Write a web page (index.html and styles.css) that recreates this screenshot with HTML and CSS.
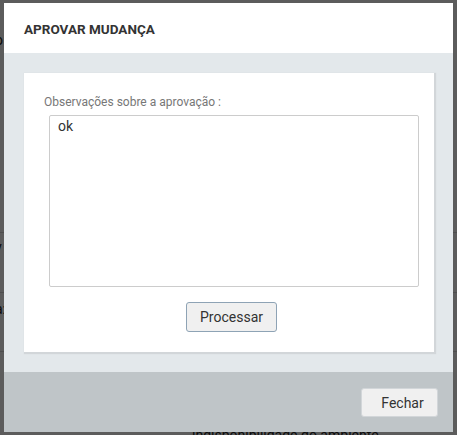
FILE: index.html
```html
<!DOCTYPE html>
<html lang="pt-BR">
<head>
<meta charset="utf-8">
<title>Aprovar mudança</title>
<link rel="stylesheet" href="styles.css">
</head>
<body>
<div class="page">
  <div class="row row-a"><span class="cell">o</span></div>
  <div class="row row-b"><span class="cell">v</span></div>
  <div class="row row-c"><span class="cell">a:</span></div>
  <div class="row row-d"></div>
  <div class="row row-e"><span class="tail">indisponibilidade do ambiente.</span></div>
</div>
<div class="overlay"></div>
<div class="modal">
  <div class="modal-header">
    <h1 class="modal-title">APROVAR MUDANÇA</h1>
  </div>
  <div class="modal-body">
    <div class="panel">
      <label class="field-label" for="obs">Observações sobre a aprovação :</label>
      <textarea id="obs" class="field-text">ok</textarea>
      <div class="actions">
        <button class="btn btn-process" type="button">Processar</button>
      </div>
    </div>
  </div>
  <div class="modal-footer">
    <button class="btn btn-close" type="button">Fechar</button>
  </div>
</div>
</body>
</html>
```
FILE: styles.css
```css
html, body {
  margin: 0;
  padding: 0;
}
body {
  width: 457px;
  height: 435px;
  overflow: hidden;
  background: #ffffff;
  font-family: Roboto, "Liberation Sans", Arial, sans-serif;
  position: relative;
}
.page {
  display: flex;
  flex-direction: column;
}
.row {
  border-bottom: 1px solid #d8d8d8;
  color: #222;
  font-size: 14px;
  box-sizing: border-box;
  display: flex;
  align-items: flex-start;
}
.cell {
  margin-left: -5px;
}
.row-a { height: 233px; padding-top: 32px; }
.row-b { height: 60px; padding-top: 6px; }
.row-c { height: 59px; padding-top: 8px; }
.row-d { height: 70px; border-bottom: none; }
.row-e { height: 30px; border-bottom: none; }
.tail {
  margin-left: 192px;
  margin-top: 5px;
  font-size: 14px;
  line-height: 16px;
}
.overlay {
  position: absolute;
  inset: 0;
  background: rgba(0, 0, 0, 0.64);
}
.modal {
  position: absolute;
  left: 4px;
  top: 3px;
  width: 449px;
  height: 429px;
  display: flex;
  flex-direction: column;
  background: #e3e8eb;
}
.modal-header {
  height: 50px;
  background: #ffffff;
  display: flex;
  align-items: center;
  padding-left: 20px;
}
.modal-title {
  margin: 0;
  font-size: 13.5px;
  font-weight: 700;
  color: #333333;
  letter-spacing: 0;
  padding-top: 1px;
}
.modal-body {
  height: 319px;
  box-sizing: border-box;
  padding: 20px 19px 20px 20px;
}
.panel {
  background: #ffffff;
  height: 279px;
  box-sizing: border-box;
  padding: 22px 15px 20px 20px;
  box-shadow: 1px 1px 1px 1px #d2d6d9;
  display: flex;
  flex-direction: column;
}
.field-label {
  font-size: 12px;
  color: #777777;
  line-height: 14px;
  height: 14px;
}
.field-text {
  margin: 6px 0 0 5px;
  width: 370px;
  height: 172px;
  box-sizing: border-box;
  border: 1px solid #cccccc;
  border-radius: 2px;
  padding: 2px 8px;
  font-family: Roboto, "Liberation Sans", Arial, sans-serif;
  font-size: 14px;
  color: #333333;
  resize: none;
  outline: none;
}
.actions {
  display: flex;
  justify-content: center;
  margin-top: 15px;
  padding-left: 0;
}
.btn {
  font-family: Roboto, "Liberation Sans", Arial, sans-serif;
  font-size: 14px;
  color: #333333;
  background: #f0f0f0;
  border-radius: 3px;
  box-sizing: border-box;
  cursor: pointer;
}
.btn-process {
  width: 91px;
  height: 30px;
  border: 1px solid #8ea3b5;
}
.modal-footer {
  height: 60px;
  background: #bfc5c8;
  display: flex;
  justify-content: flex-end;
  align-items: flex-start;
  padding: 16px 15px 0 0;
  box-sizing: border-box;
}
.btn-close {
  width: 77px;
  height: 29px;
  border: 1px solid #d2d6d9;
  padding: 0 0 0 6px;
}
```
